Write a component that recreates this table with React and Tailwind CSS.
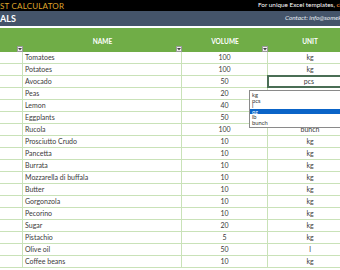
import React from 'react';

const rows = [
  ['Tomatoes', '100', 'kg'],
  ['Potatoes', '100', 'kg'],
  ['Avocado', '50', 'pcs'],
  ['Peas', '20', ''],
  ['Lemon', '40', ''],
  ['Eggplants', '50', ''],
  ['Rucola', '100', 'bunch'],
  ['Prosciutto Crudo', '10', 'kg'],
  ['Pancetta', '10', 'kg'],
  ['Burrata', '10', 'kg'],
  ['Mozzarella di buffala', '10', 'kg'],
  ['Butter', '10', 'kg'],
  ['Gorgonzola', '10', 'kg'],
  ['Pecorino', '10', 'kg'],
  ['Sugar', '20', 'kg'],
  ['Pistachio', '5', 'kg'],
  ['Olive oil', '50', 'l'],
  ['Coffee beans', '10', 'kg'],
];

const units = ['kg', 'pcs', 'l', 'oz', 'lb', 'bunch'];

// little excel filter button
const FilterBtn = () => (
  <div className="absolute right-0 bottom-0 w-[6px] h-[6px] bg-[#f2f2f2] border border-[#9a9a9a] flex items-center justify-center">
    <svg width="4" height="3" viewBox="0 0 4 3">
      <path d="M0 0 L4 0 L2 2.5 Z" fill="#444" />
    </svg>
  </div>
);

const App = () => {
  return (
    <div className="w-[340px] h-[270px] overflow-hidden bg-white relative font-['Lato','Liberation_Sans',sans-serif]">
      {/* title bar */}
      <div className="h-[11px] bg-black flex items-center whitespace-nowrap overflow-hidden">
        <span className="w-[258px] shrink-0 text-[8px] leading-none text-[#dfa42b] tracking-[0.2px]">ST CALCULATOR</span>
        <span className="shrink-0 text-[6.4px] leading-none text-white font-normal">
          For unique Excel templates, <span className="text-[#e8792a] font-bold">click here</span>
        </span>
      </div>
      {/* sub bar */}
      <div className="h-[15px] bg-[#44546a] flex items-center whitespace-nowrap overflow-hidden">
        <span className="w-[285px] shrink-0 text-[9px] leading-none text-white font-bold">ALS</span>
        <span className="shrink-0 text-[6.4px] leading-none text-[#e8ecf2] italic">Contact: info@someka.net</span>
      </div>
      <div className="h-[2px] bg-white" />

      {/* header */}
      <div className="h-[24px] bg-[#70ad47] flex text-white font-bold text-[6.5px] leading-none">
        <div className="w-[23px] relative shrink-0">
          <FilterBtn />
        </div>
        <div className="w-[159px] relative shrink-0 flex justify-center pt-[11px]">
          NAME
          <FilterBtn />
        </div>
        <div className="w-[86px] relative shrink-0 flex justify-center pt-[11px]">
          VOLUME
          <FilterBtn />
        </div>
        <div className="w-[84px] shrink-0 flex justify-center pt-[11px]">UNIT</div>
      </div>

      {/* rows */}
      <div className="text-[7px] text-[#3a3a3a]">
        {rows.map((r, i) => (
          <div key={i} className="h-[12px] flex border-b border-[#c9e2b8]">
            <div className="w-[23px] shrink-0 border-r border-[#c9e2b8]" />
            <div className="w-[159px] shrink-0 border-r border-[#c9e2b8] pl-[2px] flex items-center">{r[0]}</div>
            <div className="w-[86px] shrink-0 border-r border-[#c9e2b8] flex items-center justify-center">{r[1]}</div>
            <div
              className={
                i === 2
                  ? 'w-[84px] shrink-0 flex items-center justify-center border-2 border-[#4a6e55] -mt-[1px] h-[13px] -ml-[1px]'
                  : 'w-[84px] shrink-0 flex items-center justify-center'
              }
            >
              {r[2]}
            </div>
          </div>
        ))}
      </div>

      {/* validation dropdown */}
      <div className="absolute left-[249px] top-[90px] w-[100px] bg-white border border-[#8a8a8a] py-[1px] text-[5.8px] leading-[5.6px] text-[#333]">
        {units.map((u) => (
          <div key={u} className={u === 'oz' ? 'bg-[#0a64c8] text-white pl-[2px]' : 'pl-[2px]'}>
            {u}
          </div>
        ))}
      </div>
    </div>
  );
};

export default App;
